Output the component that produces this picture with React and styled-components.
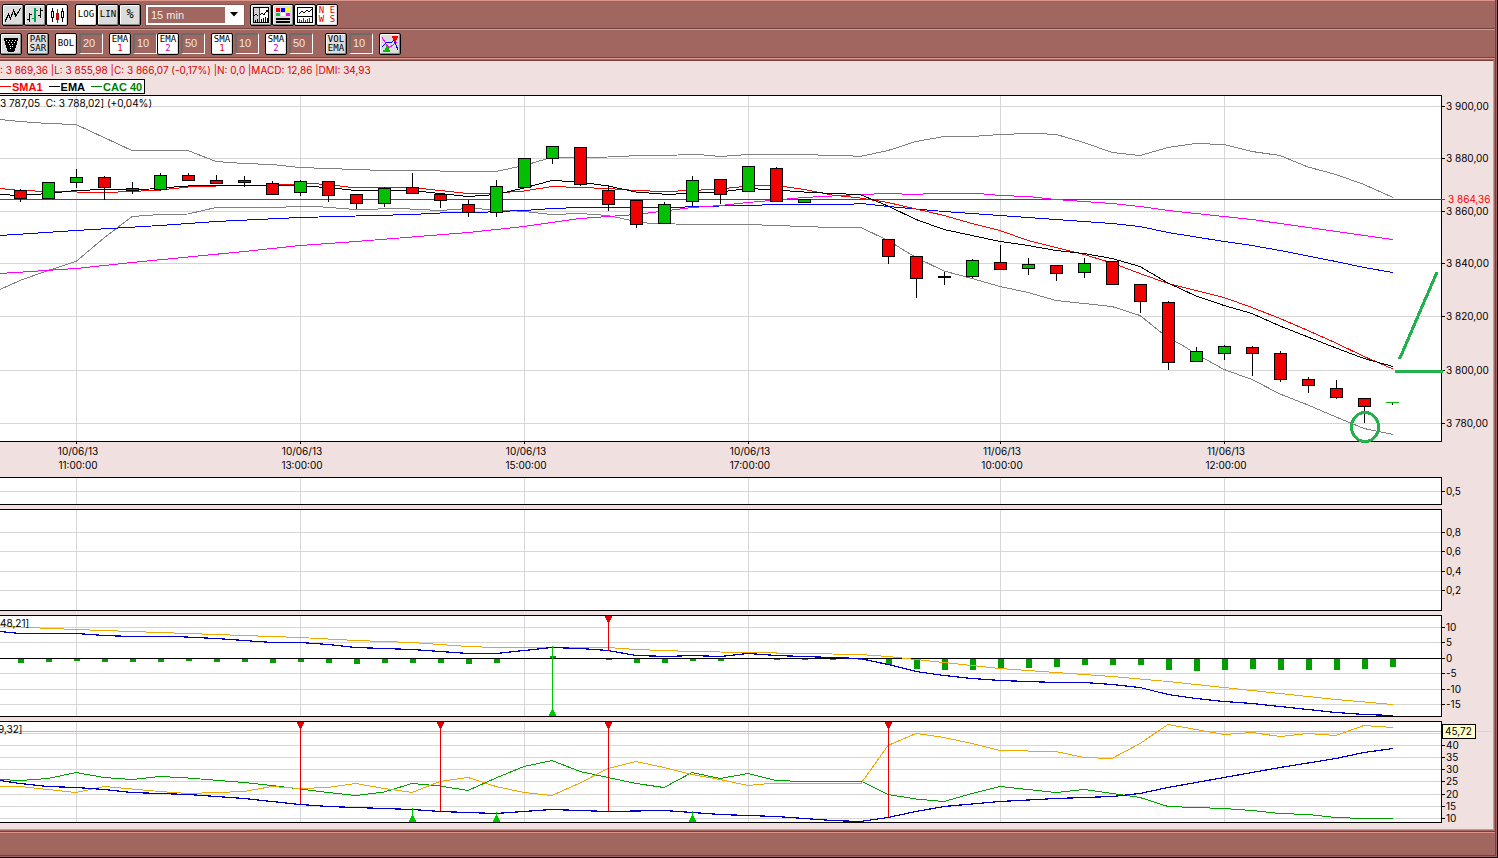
import React from 'react';
import styled, { createGlobalStyle } from 'styled-components';

const GlobalStyle = createGlobalStyle`
  * {
    box-sizing: border-box;
  }

  body {
    margin: 0;
    background: #a0665f;
    font-family: 'Liberation Sans', Arial, sans-serif;
    font-size: 11px;
  }
`;

const Frame = styled.div`
  min-height: 100vh;
  padding: 0 1px 1px 0;
  background: #a0665f;
  border-right: 1px solid #000;
  border-bottom: 1px solid #000;
  display: flex;
  flex-direction: column;
  overflow: hidden;
`;

const FrameInner = styled.div`
  flex: 1;
  display: flex;
  flex-direction: column;
  border-right: 1px solid #6f443f;
  border-bottom: 1px solid #6f443f;
`;

const Toolbar = styled.div`
  display: flex;
  align-items: center;
  height: 29px;
  padding-left: ${(props) => props.$indent || 0};
  border-top: 1px solid #de948a;
  border-bottom: 1px solid #6f443f;
`;

const Group = styled.div`
  display: flex;
  align-items: center;
  flex: none;
  gap: ${(props) => props.$gap || 0};
  margin-right: ${(props) => props.$after || '6px'};
`;

const ToolButton = styled.button`
  width: 22px;
  height: 22px;
  flex: none;
  padding: 0;
  display: flex;
  flex-direction: column;
  align-items: center;
  justify-content: center;
  background: ${(props) => (props.$on ? '#fff' : '#dcdcdc')};
  border: 1px solid #000;
  border-radius: 2px;
  box-shadow: inset -1px -1px 0 ${(props) => (props.$on ? '#ddd' : '#8c8c8c')},
    inset 1px 1px 0 #fff;
  color: #000;
  font-family: 'DejaVu Sans Mono', monospace;
  font-size: ${(props) => (props.$large ? '12px' : '9px')};
  line-height: 9px;
`;

const Mark = styled.span`
  color: ${(props) => props.$color};
`;

const Field = styled.input`
  width: 24px;
  height: 21px;
  flex: none;
  padding: 0 0 2px 2px;
  background: #a0665f;
  border: 2px solid;
  border-color: #6b6b6b #fff #fff #6b6b6b;
  border-width: 2px 1px 1px 2px;
  color: #f0e4e2;
  font-family: inherit;
  font-size: 11px;
`;

const SelectBox = styled.div`
  position: relative;
  width: 98px;
  height: 20px;
`;

const Select = styled.select`
  appearance: none;
  width: 100%;
  height: 100%;
  padding: 0 0 0 3px;
  background: #a0665f;
  border: 2px solid #fff;
  border-radius: 0;
  box-shadow: 0 0 0 1px #8c5750;
  color: #f4eae8;
  font-family: inherit;
  font-size: 11px;
`;

const SelectArrow = styled.span`
  position: absolute;
  top: 1px;
  right: 1px;
  width: 18px;
  height: 18px;
  display: flex;
  align-items: center;
  justify-content: center;
  background: #fff;
  pointer-events: none;
`;

const Pane = styled.main`
  margin-right: 1px;
  padding-bottom: 6px;
  background: #f1e0e0;
  border-top: 1px solid #6f443f;
  border-right: 1px solid #de948a;
  border-bottom: 1px solid #de948a;
`;

const PaneEdge = styled.div`
  height: 2px;
  border-top: 1px solid #de948a;
`;

const Quote = styled.div`
  height: 18px;
  line-height: 18px;
  font-family: Inter, 'Liberation Sans', sans-serif;
  font-size: 10px;
  color: #d80000;
  white-space: pre;
`;

const Legend = styled.div`
  display: flex;
  align-items: center;
  gap: 6px;
  width: max-content;
  height: 15px;
  margin-bottom: 1px;
  padding-right: 2px;
  background: #fff;
  border: 1px solid #000;
  border-left: 0;
`;

const LegendItem = styled.span`
  display: flex;
  align-items: center;
  gap: 1px;
  color: ${(props) => props.$color};
  font-weight: bold;

  &::before {
    content: '';
    width: 11px;
    height: 1px;
    background: currentColor;
  }
`;

const ChartRow = styled.div`
  display: flex;
  height: ${(props) => props.$height}px;
  margin-bottom: ${(props) => props.$after || 0}px;
`;

const Plot = styled.div`
  flex: 1;
  min-width: 0;
  background: #fff;
  border: 1px solid #000;
  border-left: 0;
`;

const ChartSvg = styled.svg`
  display: block;
  width: 100%;
  height: 100%;
  overflow: visible;
  position: relative;
  shape-rendering: crispEdges;
`;

const Scale = styled.svg`
  display: block;
  flex: none;
  width: 51px;
  overflow: visible;
`;

const TimeAxis = styled.div`
  height: 35px;
  margin-right: 51px;
`;

const ScaleText = styled.text`
  font-family: Inter, 'Liberation Sans', sans-serif;
  font-size: 10px;
  fill: ${(props) => props.$color || '#000'};
  text-anchor: ${(props) => props.$anchor || 'start'};
`;

const Footer = styled.footer`
  flex: 1;
  min-height: 24px;
  margin-top: 1px;
  border-top: 1px solid #6f443f;
  box-shadow: inset 0 1px 0 #de948a;
`;

const hours = [76, 300, 524, 748, 1000, 1224];

const timeLabels = [
  { x: 76, day: '10/06/13', time: '11:00:00' },
  { x: 300, day: '10/06/13', time: '13:00:00' },
  { x: 524, day: '10/06/13', time: '15:00:00' },
  { x: 748, day: '10/06/13', time: '17:00:00' },
  { x: 1000, day: '11/06/13', time: '10:00:00' },
  { x: 1224, day: '11/06/13', time: '12:00:00' }
];

const priceTicks = [
  [106, '3 900,00'],
  [158, '3 880,00'],
  [211, '3 860,00'],
  [263, '3 840,00'],
  [316, '3 820,00'],
  [370, '3 800,00'],
  [423, '3 780,00']
];

// x, body top, body bottom, high, low, up
const candles = [
  [20, 190, 199, 189, 202, 0], [48, 182, 199, 182, 199, 1], [76, 177, 183, 169, 188, 1],
  [104, 177, 188, 176, 200, 0], [132, 188, 191, 182, 194, 0], [160, 175, 190, 173, 191, 1],
  [188, 175, 181, 173, 181, 0], [216, 180, 184, 175, 184, 0], [244, 180, 183, 176, 187, 0],
  [272, 183, 195, 181, 195, 0], [300, 181, 193, 180, 196, 1], [328, 181, 196, 181, 202, 0],
  [356, 194, 204, 194, 209, 0], [384, 188, 204, 187, 207, 1], [412, 187, 194, 173, 194, 0],
  [440, 194, 201, 194, 208, 0], [468, 204, 213, 200, 217, 0], [496, 186, 213, 180, 217, 1],
  [524, 158, 188, 158, 188, 1], [552, 146, 159, 146, 164, 1], [580, 147, 185, 147, 186, 0],
  [608, 190, 205, 185, 211, 0], [636, 200, 225, 200, 228, 0], [664, 204, 224, 202, 224, 1],
  [692, 180, 202, 176, 206, 1], [720, 179, 195, 179, 204, 0], [748, 166, 192, 166, 192, 1],
  [776, 168, 202, 167, 202, 0], [804, 199, 203, 199, 203, 1], [888, 239, 257, 239, 264, 0],
  [916, 256, 279, 256, 298, 0], [944, 276, 278, 272, 285, 0], [972, 260, 277, 259, 278, 1],
  [1000, 262, 270, 245, 270, 0], [1028, 264, 269, 258, 275, 1], [1056, 265, 274, 265, 281, 0],
  [1084, 263, 273, 258, 278, 1], [1112, 261, 285, 261, 285, 0], [1140, 284, 302, 284, 313, 0],
  [1168, 302, 363, 301, 370, 0], [1196, 351, 362, 347, 362, 1], [1224, 346, 354, 345, 360, 1],
  [1252, 347, 354, 346, 376, 0], [1280, 353, 380, 351, 382, 0], [1308, 379, 386, 377, 393, 0],
  [1336, 388, 398, 380, 399, 0], [1364, 398, 407, 398, 423, 0]
];

const priceLines = [
  {
    color: '#808080',
    points:
      '0,119.5 20,121.5 48,123.5 76,124.5 104,137.5 132,150.5 188,150.5 216,161.5 244,163.5 272,164.5 300,167.5 328,168.5 356,169.5 384,170.5 412,170.5 468,171.5 496,171.5 524,165.5 548,158.5 570,157.5 608,157 640,155.5 678,155 698,154.5 720,156.5 748,154.5 790,154.5 846,155.5 860,156.5 888,150.5 916,141.5 944,136.5 972,136.5 1000,134.5 1028,133.5 1042,133.5 1058,135 1084,142.5 1112,152.5 1140,155.5 1168,147.5 1196,143.5 1224,144.5 1252,151.5 1280,155.5 1308,167 1336,174.5 1364,184.5 1393,197.5'
  },
  {
    color: '#808080',
    points:
      '0,289.5 20,280.5 48,270.5 76,261.5 104,238 132,216.5 160,214.5 188,214 216,207.5 272,207.5 300,206.5 316,206.5 356,209.5 400,208.5 440,210.5 468,208.5 496,209.5 524,211.5 552,214.5 580,213.5 608,215.5 636,221.5 650,223.5 700,224.5 748,224.5 776,225.5 804,226.5 832,227.5 861,227.5 888,240.5 916,257.5 944,271 972,278.5 1000,286.5 1028,292.5 1056,300.5 1084,303.5 1112,306.5 1140,315.5 1168,338 1182,345 1196,354 1224,369.5 1252,379.5 1280,394 1308,405 1336,417 1364,428.5 1393,434.5'
  },
  {
    color: '#00f',
    points:
      '0,235.5 76,230.5 160,225.5 216,221.5 300,217.5 356,216 412,214.5 440,213 480,212.5 496,211.5 524,210.5 552,208.5 580,207.5 678,207.5 692,206.5 748,205.5 776,204.5 846,204.5 862,203.5 888,206.5 916,209 944,211.5 1000,215.5 1056,219.5 1112,223.5 1140,226.5 1168,232.5 1224,241.5 1252,245.5 1280,250.5 1336,261.5 1364,267.5 1393,272.5'
  },
  {
    color: '#f0f',
    points:
      '0,273.5 76,268.5 132,262.5 188,257 244,251.5 300,245.5 356,241.5 412,237 468,232.5 496,229.5 524,226.5 552,222.5 580,218.5 608,216.5 636,214.5 664,211 692,207.5 720,205.5 748,202.5 776,200 804,197.5 832,196 860,194.5 888,193.5 916,194.5 930,193.5 978,193.5 1000,195.5 1028,196.5 1056,199.5 1084,201.5 1112,203.5 1140,206.5 1168,210.5 1196,213.5 1224,216.5 1252,219.5 1280,223.5 1308,227.5 1336,231.5 1364,235.5 1393,239.5'
  },
  {
    color: '#f00',
    points:
      '0,188.5 20,190.5 50,191.5 104,192.5 132,191.5 160,190 188,187 216,186 244,185.5 272,185 310,183.5 328,184.5 352,187.5 412,187.5 440,190.5 468,193.5 496,193 524,191 552,186.5 580,187.5 608,188.5 636,190.5 664,191.5 692,190.5 720,189 748,186 776,185.5 804,189.5 832,195 860,198 888,202.5 916,209 944,215.5 972,223.5 1000,230.5 1028,240.5 1056,247.5 1084,254.5 1112,263 1140,273.5 1168,283.5 1196,290.5 1224,297.5 1252,307.5 1280,318.5 1308,330.5 1336,343 1364,356.5 1393,369'
  },
  {
    color: '#000',
    points:
      '0,194.5 20,195.5 48,193.5 76,190.5 104,189.5 150,189 174,187 188,186 216,185.5 260,185.5 300,186 328,187.5 356,190.5 412,190.5 440,193.5 468,196.5 496,194.5 524,188 552,180.5 580,182 608,186 636,192 668,194.5 692,193 720,192 748,188.5 776,190 804,192 832,193.5 860,194.5 888,206 916,219.5 944,229.5 972,235.5 1000,241.5 1028,245.5 1056,250.5 1084,253.5 1112,258.5 1140,266.5 1168,283 1196,296 1224,305.5 1252,313.5 1280,326 1308,337 1336,348 1364,358.5 1393,366.5'
  }
];

const macdTicks = [
  [627, '10'],
  [642, '5'],
  [658, '0'],
  [673, '-5'],
  [689, '-10'],
  [704, '-15']
];

const macdBars = [
  [20, 663], [48, 662], [76, 661], [104, 662], [132, 662], [160, 662], [188, 661], [216, 662],
  [244, 662], [272, 663], [300, 662], [328, 663], [356, 664], [384, 663], [412, 663], [440, 663],
  [468, 664], [496, 663], [608, 660], [636, 663], [664, 663], [692, 661], [720, 661], [776, 660],
  [804, 660], [832, 660], [860, 660], [888, 665], [916, 669], [944, 670], [972, 670], [1000, 668],
  [1028, 668], [1056, 667], [1084, 665], [1112, 665], [1140, 665], [1168, 670], [1196, 671],
  [1224, 670], [1252, 669], [1280, 670], [1308, 670], [1336, 670], [1364, 669], [1392, 667]
];

const macdLines = [
  {
    color: '#f0a800',
    points:
      '0,625.5 28,627.5 76,629.5 160,632.5 216,634.5 300,637.5 356,640.5 412,642.5 468,646.5 496,647.5 608,647.5 636,649.5 692,651.5 748,652.5 804,653.5 860,654.5 888,656.5 916,659.5 944,662.5 972,665.5 1000,668.5 1056,672.5 1112,676.5 1168,681.5 1224,687.5 1280,693.5 1336,699.5 1393,704.5'
  },
  {
    color: '#0000c8',
    bold: true,
    points:
      '0,631.5 20,633.5 76,633.5 104,635.5 132,636.5 176,636.5 216,638.5 272,642.5 300,642.5 328,644.5 356,647.5 412,649.5 440,651.5 468,653.5 496,653.5 524,650.5 552,647.5 580,648.5 608,650.5 636,655.5 668,656.5 692,655.5 720,656.5 748,653.5 776,655.5 804,656.5 832,657.5 860,658.5 888,664.5 916,671.5 944,675.5 972,678.5 1000,680.5 1056,682.5 1084,682.5 1112,684.5 1140,687.5 1168,694.5 1196,698.5 1224,701.5 1252,703.5 1280,706.5 1308,709.5 1336,712.5 1364,714.5 1393,715.5'
  }
];

const dmiTicks = [
  [745, '40'],
  [757, '35'],
  [769, '30'],
  [781, '25'],
  [794, '20'],
  [806, '15'],
  [818, '10']
];

const dmiLines = [
  {
    color: '#00a000',
    points:
      '0,779.5 20,780.5 48,778.5 76,772.5 104,777.5 132,779.5 160,776.5 188,778 244,782.5 272,785.5 300,789 328,792.5 356,795.5 384,792 412,783.5 440,786 468,790.5 496,778 524,766.5 552,760.5 580,771.5 608,777.5 636,783.5 664,787.5 692,772.5 720,778.5 748,773.5 776,780.5 804,781.5 862,781.5 888,794.5 916,799 944,801.5 972,793.5 1000,786.5 1056,792.5 1084,789.5 1112,793.5 1140,797.5 1168,806.5 1224,808.5 1252,810.5 1280,813.5 1308,814.5 1336,817.5 1364,818.5 1393,818.5'
  },
  {
    color: '#f0a800',
    points:
      '0,786.5 20,786.5 76,792.5 104,786.5 160,791.5 188,793.5 244,791.5 272,786.5 300,788.5 328,787.5 356,783.5 384,788.5 412,792.5 440,781.5 468,777.5 496,786.5 524,792.5 552,795.5 580,783 608,768.5 636,761.5 664,767.5 692,774.5 720,779.5 748,785.5 770,783.5 861,783.5 888,745.5 916,733.5 944,737.5 972,743.5 1000,750.5 1056,751.5 1084,757.5 1112,758.5 1140,743.5 1168,724.5 1196,729.5 1224,734.5 1252,732.5 1280,736.5 1308,733.5 1336,735.5 1364,725.5 1393,727.5'
  },
  {
    color: '#0000c8',
    bold: true,
    points:
      '0,780.5 20,783.5 48,786.5 76,787.5 104,789.5 132,792.5 188,794.5 244,798.5 300,804.5 328,806.5 356,807.5 412,809.5 440,811.5 496,813.5 524,811.5 552,809.5 608,811.5 664,810.5 720,814.5 776,816.5 804,818.5 832,820.5 860,821.5 888,817.5 916,811.5 944,806.5 1000,801.5 1056,798.5 1084,797.5 1112,796.5 1140,793.5 1168,787.5 1224,777.5 1280,767.5 1336,758.5 1364,752.5 1393,748.5'
  }
];

function Lines({ lines }) {
  return lines.map((line, index) => (
    <polyline
      key={index}
      points={line.points}
      fill="none"
      stroke={line.color}
      strokeWidth={line.bold ? 1.2 : 1}
    />
  ));
}

function SellSignal({ x, top, to }) {
  return (
    <g fill="#e80000">
      <rect x={x} y={top} width="1" height={to - top} />
      <path d={`M${x - 3} ${top}h7v2h-1v2h-1v2h-3v-2h-1v-2h-1z`} />
    </g>
  );
}

function BuySignal({ x, from, bottom }) {
  return (
    <g fill="#00c800">
      <rect x={x} y={from} width="1" height={bottom - from} />
      <path d={`M${x - 3} ${bottom}h7v-2h-1v-2h-1v-2h-3v2h-1v2h-1z`} />
    </g>
  );
}

// All charts share one page-wide coordinate system, top is the y of the panel border
function Panel({ top, height, after, rows, ticks, scale, children }) {
  return (
    <ChartRow $height={height} $after={after}>
      <Plot>
        <ChartSvg viewBox={`0 ${top + 1} 1441 ${height - 2}`} preserveAspectRatio="xMaxYMin slice">
          {rows.map((y) => (
            <rect key={y} x="0" y={y} width="1441" height="1" fill="#d6d6d6" />
          ))}
          {hours.map((x) => (
            <rect key={x} x={x} y={top + 1} width="1" height={height - 2} fill="#d6d6d6" />
          ))}
          {children}
        </ChartSvg>
      </Plot>
      <Scale viewBox={`0 ${top} 51 ${height}`}>
        {ticks.map(([y, label]) => (
          <g key={label}>
            <rect x="0" y={y} width="3" height="1" />
            <ScaleText x="4" y={y + 4}>{label}</ScaleText>
          </g>
        ))}
        {scale}
      </Scale>
    </ChartRow>
  );
}

function PriceChart() {
  return (
    <Panel
      top={95}
      height={347}
      rows={priceTicks.map(([y]) => y)}
      ticks={priceTicks}
      scale={
        <>
          <rect x="0" y="199" width="3" height="1" fill="#f00" />
          <ScaleText x="6" y="203" $color="#f00">3 864,36</ScaleText>
        </>
      }
    >
      <rect x="0" y="199" width="1442" height="1" fill="#f00" />
      <Lines lines={priceLines} />
      {candles.map(([x, top, bottom, high, low, up]) => (
        <g key={x}>
          <rect x={x} y={high} width="1" height={low - high} />
          <rect x={x - 6} y={top} width="13" height={bottom - top} />
          {bottom - top > 2 && (
            <rect
              x={x - 5}
              y={top + 1}
              width="11"
              height={bottom - top - 2}
              fill={up ? '#00c000' : '#f00000'}
            />
          )}
        </g>
      ))}
      <rect x="826" y="199" width="13" height="1" fill="#008000" />
      <rect x="854" y="199" width="13" height="1" fill="#008000" />
      <rect x="1386" y="402" width="13" height="1" fill="#00c000" />
      <rect x="1392" y="403" width="1" height="2" />
      <g fill="none" stroke="#22b14c" strokeWidth="3">
        <path d="M1399.5 359L1437 272" />
        <path d="M1395 371.5H1443" />
        <ellipse cx="1365" cy="427" rx="13.500" ry="14.500" />
      </g>
      <ScaleText x="0" y="107">3 787,05{'\u00a0 '}C: 3 788,02] (+0,04%)</ScaleText>
    </Panel>
  );
}

function MacdChart() {
  return (
    <Panel top={615} height={102} after={4} rows={[627, 642, 673, 689, 704]} ticks={macdTicks}>
      {macdBars.map(([x, y]) => (
        <rect key={x} x={x - 2} y="659" width="6" height={y - 659} fill="#00a000" />
      ))}
      <rect x="550" y="656" width="6" height="2" fill="#00a000" />
      <rect x="0" y="658" width="1441" height="1" />
      <Lines lines={macdLines} />
      <SellSignal x={608} top={616} to={651} />
      <BuySignal x={552} from={646} bottom={716} />
      <ScaleText x="0" y="627">48,21]</ScaleText>
    </Panel>
  );
}

function DmiChart() {
  return (
    <Panel
      top={721}
      height={102}
      rows={[733, 745, 757, 769, 781, 794, 806, 818]}
      ticks={dmiTicks}
      scale={
        <>
          <rect x="34" y="731" width="16" height="1" fill="#d6d6d6" />
          <rect x="0.500" y="724.500" width="33" height="14" fill="#ffffcc" stroke="#000" />
          <ScaleText x="3" y="735">45,72</ScaleText>
        </>
      }
    >
      <rect x="0" y="731" width="1441" height="1" fill="#bdb8b8" />
      <Lines lines={dmiLines} />
      <SellSignal x={300} top={722} to={804} />
      <SellSignal x={440} top={722} to={811} />
      <SellSignal x={608} top={722} to={811} />
      <SellSignal x={888} top={722} to={817} />
      <BuySignal x={412} from={808} bottom={822} />
      <BuySignal x={496} from={812} bottom={822} />
      <BuySignal x={692} from={811} bottom={822} />
      <ScaleText x="-2" y="733">9,32]</ScaleText>
    </Panel>
  );
}

const Icon = ({ children }) => (
  <svg width="20" height="20" viewBox="0 0 20 20" shapeRendering="crispEdges" fill="none" stroke="#000">
    {children}
  </svg>
);

const LineIcon = () => (
  <Icon>
    <path d="M2 16.500L5.500 9.500L7.500 13.500L10.500 5.500L12.500 11.500L17.500 3.500" />
    <path d="M6 10l2 4M11 6l2 5" />
  </Icon>
);

const BarsIcon = () => (
  <Icon>
    <path d="M4.500 8v9M2 14.500h2M5 9.500h2M15.500 3v10M13 10.500h2M16 5.500h2" />
    <path d="M10 3v14M7 13.500h3M11 5.500h2" stroke="#00a050" />
    <path d="M9 3v14" stroke="#00a050" />
  </Icon>
);

const CandlesIcon = () => (
  <Icon>
    <path d="M5.500 3v3M5.500 13v4M4.500 6.500h2v6h-2zM15.500 3v3M15.500 13v4M14.500 6.500h2v6h-2z" />
    <path d="M10.500 4v14" stroke="#d00000" />
    <path d="M9.500 8.500h2v6h-2z" fill="#e00000" stroke="#c00000" />
  </Icon>
);

const SplitIcon = () => (
  <Icon>
    <rect x="2.500" y="2.500" width="15" height="15" fill="#fff" />
    <rect x="3" y="3" width="5" height="14" fill="#d0d0d0" stroke="none" />
    <path d="M8.500 3v14" stroke="#e00000" />
    <path d="M9 9.500l2-1 2 1 3-4 1 1M3 10.500l2-1 2 1" />
    <path d="M4.500 15v2M6.500 14v3M10.500 14v3M12.500 13v4M14.500 12v5M16.500 13v4" />
  </Icon>
);

const PaletteIcon = () => (
  <Icon>
    <g stroke="none">
      <rect x="3" y="3" width="4" height="4" fill="#f00" />
      <rect x="8" y="3" width="4" height="4" fill="#00f" />
      <rect x="13" y="3" width="4" height="4" fill="#ff0" />
      <rect x="3" y="8" width="4" height="3" fill="#0c4" />
      <rect x="8" y="8" width="4" height="3" fill="#fff" />
      <rect x="13" y="8" width="4" height="3" fill="#f0f" />
      <rect x="3" y="13" width="14" height="2" fill="#000" />
      <rect x="3" y="16" width="14" height="2" fill="#000" />
    </g>
  </Icon>
);

const IndicatorIcon = () => (
  <Icon>
    <rect x="2.500" y="2.500" width="15" height="15" />
    <path d="M3 11.500h14M4 9l3-3 2 2 3-3 2 2 3-3" />
    <path d="M4.500 14v3M6.500 15v2M8.500 13v4M10.500 15v2M12.500 14v3M14.500 13v4" stroke="#e00000" />
  </Icon>
);

const FilterIcon = () => (
  <Icon>
    <path d="M3 4h14l-4 13H7z" fill="#000" />
    <path d="M5 6.500h1M8 6.500h1M11 6.500h1M14 6.500h1M7 8.500h1M10 8.500h1M13 8.500h1M8 10.500h1M11 10.500h1M9 12.500h1M11 12.500h1M9 14.500h1" stroke="#fff" />
  </Icon>
);

const SignalsIcon = () => (
  <Icon>
    <path d="M2 3l4 7 3 4 8-6" stroke="#f0f" />
    <path d="M2 13l5-5 4 1 3-3 4 10" stroke="#00f" />
    <path d="M12 2h6v2h-1v2h-1v2h-2v-2h-1v-2h-1z" fill="#f00" stroke="none" />
    <path d="M3 18h7v-2h-1v-2h-1v-2h-2v2h-1v2h-2z" fill="#0b0" stroke="none" />
  </Icon>
);

function Average({ name, mark, color, value }) {
  return (
    <Group $gap="2px" $after="0">
      <ToolButton $on>
        <span>{name}</span>
        <Mark $color={color}>{mark}</Mark>
      </ToolButton>
      <Field aria-label={`${name} ${mark}`} defaultValue={value} />
    </Group>
  );
}

function App() {
  return (
    <Frame>
      <GlobalStyle />
      <FrameInner>
        <Toolbar $indent="2px">
          <Group $after="7px">
            <ToolButton aria-label="Line"><LineIcon /></ToolButton>
            <ToolButton aria-label="Bars"><BarsIcon /></ToolButton>
            <ToolButton $on aria-label="Candles"><CandlesIcon /></ToolButton>
          </Group>
          <Group $after="5px">
            <ToolButton $on>LOG</ToolButton>
            <ToolButton>LIN</ToolButton>
            <ToolButton $large>%</ToolButton>
          </Group>
          <Group>
            <SelectBox>
              <Select aria-label="Interval" defaultValue="15 min">
                <option>15 min</option>
              </Select>
              <SelectArrow>
                <svg width="8" height="5" viewBox="0 0 8 5">
                  <path d="M0 0h8L4 4.500z" />
                </svg>
              </SelectArrow>
            </SelectBox>
          </Group>
          <Group>
            <ToolButton aria-label="Split"><SplitIcon /></ToolButton>
            <ToolButton aria-label="Colours"><PaletteIcon /></ToolButton>
            <ToolButton $on aria-label="Indicators"><IndicatorIcon /></ToolButton>
            <ToolButton $on>
              <Mark $color="#e00000">N E</Mark>
              <Mark $color="#e00000">W S</Mark>
            </ToolButton>
          </Group>
        </Toolbar>
        <Toolbar>
          <Group $after="5px">
            <ToolButton aria-label="Filter"><FilterIcon /></ToolButton>
          </Group>
          <Group>
            <ToolButton>
              <span>PAR</span>
              <span>SAR</span>
            </ToolButton>
          </Group>
          <Group $gap="2px">
            <ToolButton $on>BOL</ToolButton>
            <Field aria-label="BOL" defaultValue="20" />
          </Group>
          <Group>
            <Average name="EMA" mark="1" color="#e00000" value="10" />
            <Average name="EMA" mark="2" color="#c000c0" value="50" />
          </Group>
          <Group>
            <Average name="SMA" mark="1" color="#e00000" value="10" />
          </Group>
          <Group $after="12px">
            <Average name="SMA" mark="2" color="#c000c0" value="50" />
          </Group>
          <Group $gap="2px">
            <ToolButton>
              <span>VOL</span>
              <span>EMA</span>
            </ToolButton>
            <Field aria-label="VOL EMA" defaultValue="10" />
          </Group>
          <Group>
            <ToolButton aria-label="Signals"><SignalsIcon /></ToolButton>
          </Group>
        </Toolbar>
        <PaneEdge />
        <Pane>
          <Quote>: 3 869,36 |L: 3 855,98 |C: 3 866,07 (-0,17%) |N: 0,0 |MACD: 12,86 |DMI: 34,93</Quote>
          <Legend>
            <LegendItem $color="#f00">SMA1</LegendItem>
            <LegendItem $color="#000">EMA</LegendItem>
            <LegendItem $color="#008000">CAC 40</LegendItem>
          </Legend>
          <PriceChart />
          <TimeAxis>
            <ChartSvg viewBox="0 442 1442 35" preserveAspectRatio="xMaxYMin slice">
              {timeLabels.map((label) => (
                <g key={label.x}>
                  <rect x={label.x} y="442" width="1" height="2" />
                  <ScaleText x={label.x + 2} y="455" $anchor="middle">{label.day}</ScaleText>
                  <ScaleText x={label.x + 2} y="469" $anchor="middle">{label.time}</ScaleText>
                </g>
              ))}
            </ChartSvg>
          </TimeAxis>
          <Panel top={477} height={28} after={4} rows={[491]} ticks={[[491, '0,5']]} />
          <Panel
            top={509}
            height={102}
            after={4}
            rows={[532, 551, 571, 590]}
            ticks={[[532, '0,8'], [551, '0,6'], [571, '0,4'], [590, '0,2']]}
          />
          <MacdChart />
          <DmiChart />
        </Pane>
        <Footer />
      </FrameInner>
    </Frame>
  );
}

export default App;
